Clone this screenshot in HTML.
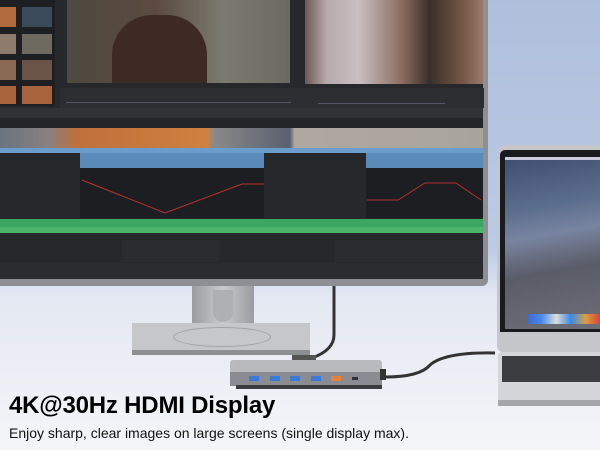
<!DOCTYPE html><html><head><style>
*{margin:0;padding:0;box-sizing:border-box}
body{width:600px;height:450px;overflow:hidden;position:relative;background:linear-gradient(#aebfdc 0%,#bccbe4 55%,#e4e8f2 66%,#f4f5f8 100%);font-family:"Liberation Sans",sans-serif}
.a{position:absolute}
</style></head><body>
<!-- stand -->
<div class="a" style="left:192px;top:280px;width:62px;height:46px;background:linear-gradient(90deg,#9a9ca0,#c8cacd 50%,#9a9ca0)"></div>
<div class="a" style="left:213px;top:290px;width:20px;height:32px;background:#aeb0b4;border-radius:0 0 10px 10px"></div>
<div class="a" style="left:132px;top:323px;width:178px;height:32px;background:#c5c7cb;border-bottom:5px solid #8d8f93"></div>
<div class="a" style="left:173px;top:327px;width:98px;height:20px;border:1px solid #a0a2a6;border-radius:50%"></div>
<!-- monitor -->
<div class="a" style="left:0;top:0;width:488px;height:286px;background:#8d8f94;border-radius:0 0 6px 0"></div>
<div class="a" style="left:0;top:0;width:483px;height:279px;background:#26282c"></div>
<!-- left thumbs -->
<div class="a" style="left:0;top:0;width:55px;height:106px;background:#1d1f22"></div>
<div class="a" style="left:0;top:7px;width:16px;height:20px;background:#b06a3c"></div>
<div class="a" style="left:22px;top:7px;width:30px;height:20px;background:#3b4a5a"></div>
<div class="a" style="left:0;top:34px;width:16px;height:20px;background:#8e7a6a"></div>
<div class="a" style="left:22px;top:34px;width:30px;height:20px;background:#6f6a60"></div>
<div class="a" style="left:0;top:60px;width:16px;height:20px;background:#8a6a55"></div>
<div class="a" style="left:22px;top:60px;width:30px;height:20px;background:#6a5448"></div>
<div class="a" style="left:0;top:86px;width:16px;height:18px;background:#a8623c"></div>
<div class="a" style="left:22px;top:86px;width:30px;height:18px;background:#a8623c"></div>
<!-- videos -->
<div class="a" style="left:67px;top:0;width:223px;height:83px;background:linear-gradient(90deg,#4d4a40,#5c4a40 40%,#7a7a70 70%,#6a6a62)"></div>
<div class="a" style="left:112px;top:15px;width:95px;height:68px;background:#3d2a24;border-radius:40px 40px 0 0"></div>
<div class="a" style="left:305px;top:0;width:178px;height:84px;background:linear-gradient(90deg,#6a5a55,#b8a8aa 12%,#c9bfc3 30%,#8a6a5c 55%,#3a2e2a 70%,#7a5a4a 90%,#9a7a6a)"></div>
<!-- controls -->
<div class="a" style="left:60px;top:88px;width:424px;height:20px;background:#2c2e32"></div>
<div class="a" style="left:66px;top:102px;width:225px;height:1px;background:#556"></div>
<div class="a" style="left:318px;top:103px;width:127px;height:1px;background:#556"></div>
<div class="a" style="left:0;top:108px;width:483px;height:10px;background:#303236"></div>
<div class="a" style="left:0;top:118px;width:483px;height:10px;background:#232528"></div>
<!-- clips -->
<div class="a" style="left:0;top:128px;width:483px;height:20px;background:linear-gradient(90deg,#6a7480 0,#8a8080 10%,#c0703a 16%,#d08040 43%,#8a8a8a 44%,#5a6070 60%,#b0a8a0 61%,#a8a49c 100%)"></div>
<div class="a" style="left:0;top:148px;width:483px;height:5px;background:#6a9ccc"></div>
<div class="a" style="left:80px;top:153px;width:184px;height:15px;background:#5a8ab8"></div>
<div class="a" style="left:366px;top:153px;width:117px;height:15px;background:#5a8ab8"></div>
<div class="a" style="left:80px;top:168px;width:184px;height:50px;background:#1c1e22"></div>
<div class="a" style="left:366px;top:168px;width:117px;height:50px;background:#1c1e22"></div>
<svg class="a" style="left:0;top:0" width="484" height="280">
<polyline points="82,180 165,213 242,184 264,184" fill="none" stroke="#b83030" stroke-width="1"/>
<polyline points="367,200 398,200 425,183 456,183 481,200" fill="none" stroke="#b83030" stroke-width="1"/>
</svg>
<!-- audio -->
<div class="a" style="left:0;top:219px;width:483px;height:14px;background:#3aa862"></div>
<div class="a" style="left:0;top:227px;width:483px;height:6px;background:#4cb56c"></div>
<div class="a" style="left:122px;top:240px;width:97px;height:22px;background:#2a2c30"></div>
<div class="a" style="left:335px;top:240px;width:148px;height:22px;background:#2a2c30"></div>
<div class="a" style="left:0;top:263px;width:483px;height:16px;background:#2a2c30"></div>
<!-- cables -->
<svg class="a" style="left:0;top:0" width="600" height="450">
<path d="M334 286 L334 335 Q334 350 312 358" fill="none" stroke="#333" stroke-width="3"/>
<path d="M385 377 Q420 377 430 365 Q445 352 495 353" fill="none" stroke="#333" stroke-width="3"/>
</svg>
<div class="a" style="left:292px;top:355px;width:24px;height:6px;background:#555"></div>
<!-- hub -->
<div class="a" style="left:230px;top:360px;width:152px;height:12px;background:#b8babe;border-radius:3px 3px 0 0"></div>
<div class="a" style="left:230px;top:372px;width:152px;height:14px;background:#8a8c92"></div>
<div class="a" style="left:236px;top:385px;width:146px;height:4px;background:#3a3c40"></div>
<div class="a" style="left:249px;top:376px;width:10px;height:5px;background:#3a7ad8"></div>
<div class="a" style="left:270px;top:376px;width:10px;height:5px;background:#3a7ad8"></div>
<div class="a" style="left:290px;top:376px;width:10px;height:5px;background:#3a7ad8"></div>
<div class="a" style="left:311px;top:376px;width:10px;height:5px;background:#3a7ad8"></div>
<div class="a" style="left:331px;top:376px;width:10px;height:5px;background:#e8823a"></div>
<div class="a" style="left:352px;top:377px;width:6px;height:3px;background:#333"></div>
<div class="a" style="left:380px;top:369px;width:6px;height:11px;background:#333"></div>
<!-- laptop -->
<div class="a" style="left:497px;top:145px;width:110px;height:207px;background:#c4c6ca;border-radius:8px 0 0 6px"></div>
<div class="a" style="left:500px;top:150px;width:102px;height:182px;background:#1a1b1e;border-radius:5px 0 0 0"></div>
<div class="a" style="left:505px;top:157px;width:97px;height:172px;background:linear-gradient(170deg,#3e4e6e 0%,#5c6e8e 30%,#7884a0 45%,#5a5c68 65%,#6e6e78 100%)"></div>
<div class="a" style="left:505px;top:157px;width:97px;height:3px;background:#ccd"></div>
<div class="a" style="left:527px;top:314px;width:73px;height:10px;background:linear-gradient(90deg,#3a6ad0,#4a8ae8,#ddd,#3a8ae8,#d8a040,#e04040)"></div>
<div class="a" style="left:498px;top:352px;width:105px;height:54px;background:#d4d6da;border-radius:4px 0 0 4px"></div>
<div class="a" style="left:502px;top:356px;width:98px;height:26px;background:#3a3c40"></div>
<div class="a" style="left:498px;top:400px;width:105px;height:6px;background:#a4a6aa"></div>
<!-- text -->
<div class="a" style="left:9px;top:392px;font-size:24px;font-weight:bold;color:#000;white-space:nowrap;letter-spacing:-0.2px">4K@30Hz HDMI Display</div>
<div class="a" style="left:9px;top:425px;font-size:14px;color:#111;white-space:nowrap">Enjoy sharp, clear images on large screens (single display max).</div>
</body></html>
